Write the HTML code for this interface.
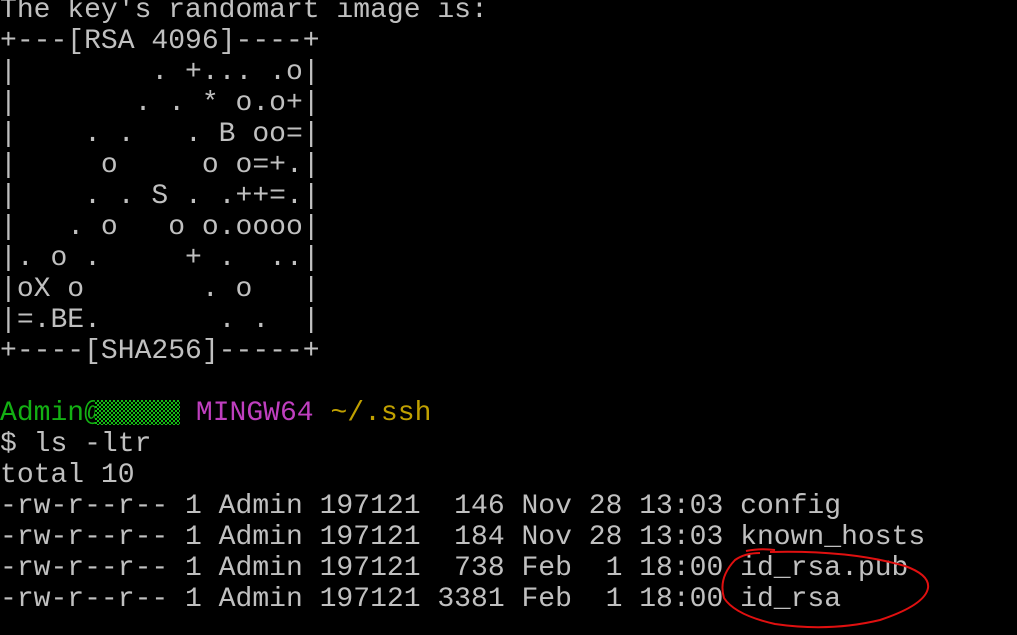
<!DOCTYPE html>
<html><head><meta charset="utf-8"><style>
html,body{margin:0;padding:0;background:#000;width:1017px;height:635px;overflow:hidden}
pre{position:absolute;left:0;top:-5px;margin:0;font-family:"Liberation Mono",monospace;font-size:28.04px;line-height:31px;color:#c0c0c0;white-space:pre}
.g{color:#13b013}.m{color:#bf3fbf;margin-left:-6px}.y{color:#c0a000}
#red{position:absolute;left:95px;top:400px;width:85px;height:25px;background:repeating-conic-gradient(#13c013 0 25%,#000 0 50%) 0 0/4px 4px}
svg{position:absolute;left:0;top:0}
</style></head><body>
<pre>The key's randomart image is:
+---[RSA 4096]----+
|        . +... .o|
|       . . * o.o+|
|    . .   . B oo=|
|     o     o o=+.|
|    . . S . .++=.|
|   . o   o o.oooo|
|. o .     + .  ..|
|oX o       . o   |
|=.BE.       . .  |
+----[SHA256]-----+

<span class="g">Admin@</span>      <span class="m">MINGW64</span> <span class="y">~/.ssh</span>
$ ls -ltr
total 10
-rw-r--r-- 1 Admin 197121  146 Nov 28 13:03 config
-rw-r--r-- 1 Admin 197121  184 Nov 28 13:03 known_hosts
-rw-r--r-- 1 Admin 197121  738 Feb  1 18:00 id_rsa.pub
-rw-r--r-- 1 Admin 197121 3381 Feb  1 18:00 id_rsa</pre>
<div id="red"></div>
<svg width="1017" height="635"><path d="M746 551 Q760 548 775 550 M770 552 Q850 550 905 566 Q930 575 928 588 Q925 605 880 620 Q830 632 775 624 Q735 615 724 598 Q718 578 735 560 Q745 553 760 553" fill="none" stroke="#e01010" stroke-width="2"/></svg>
</body></html>
